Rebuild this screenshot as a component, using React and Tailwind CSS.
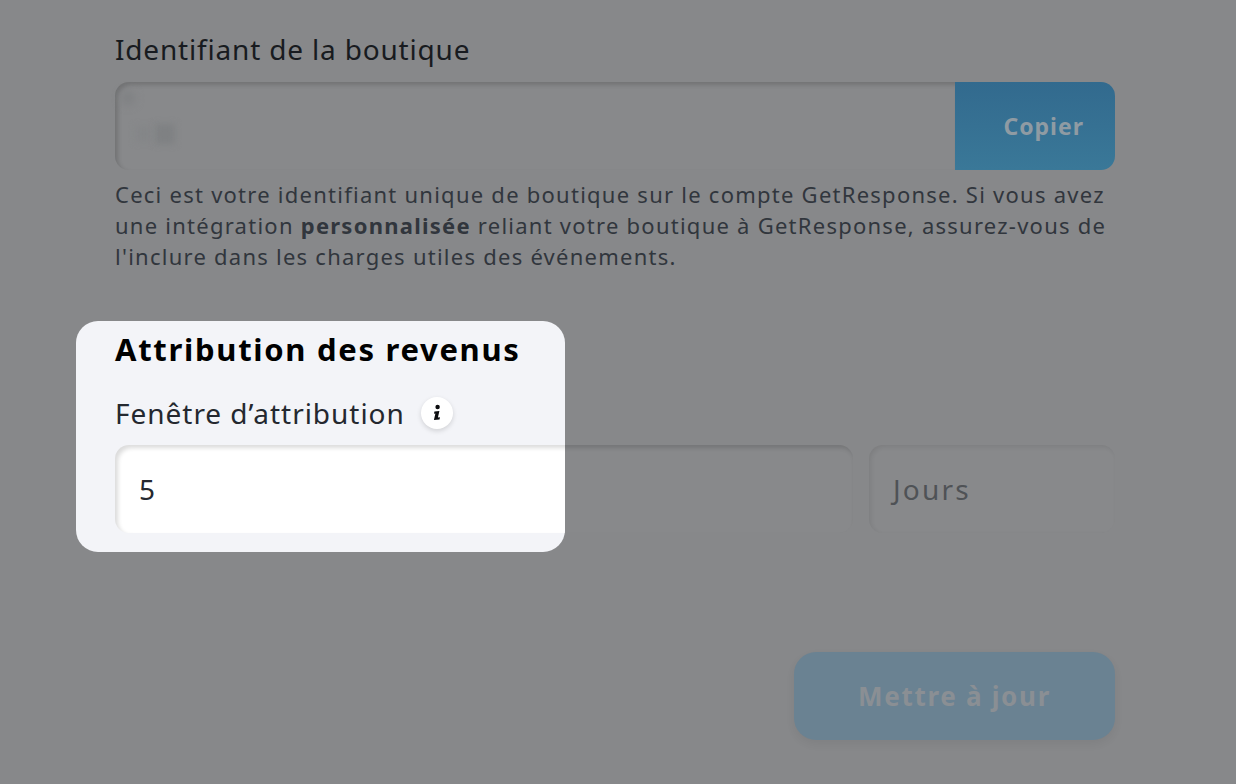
const font = { fontFamily: '"Noto Sans", "Open Sans", sans-serif' };

function InfoIcon() {
  return (
    <span className="flex h-8 w-8 items-center justify-center rounded-full bg-white shadow-[0_2px_5px_rgba(0,0,0,0.14)]">
      <svg width="14" height="18" viewBox="0 0 14 18" aria-hidden="true">
        <circle cx="7.6" cy="3" r="2.2" fill="#0b0c0f" />
        <path d="M4.4 7.4 L9.4 7 L7.9 13.4 L10 13.2 L9.5 15.6 L3.9 16 L5.4 9.6 L4 9.7 Z" fill="#0b0c0f" />
      </svg>
    </span>
  );
}

export default function App() {
  return (
    <div
      style={font}
      className="relative h-[784px] w-[1236px] overflow-hidden bg-[#87888a] pl-[115px] pr-[121px] pt-[29px]"
    >
      <div className="text-[28px] leading-[40px] tracking-[0.82px] text-[#181b20]">Identifiant de la boutique</div>

      <div className="mt-[13px] flex h-[88px]">
        <div className="relative flex-1 rounded-l-[14px] bg-[#88898b] shadow-[inset_3px_3px_4px_rgba(0,0,0,0.16)]">
          <div className="absolute left-[6px] top-[9px] h-[14px] w-[14px] rounded-full bg-[#7f8183] blur-[4px]" />
          <div className="absolute left-[40px] top-[42px] h-[20px] w-[20px] bg-[#7f8183] blur-[3px]" />
          <div className="absolute left-[20px] top-[44px] h-[16px] w-[18px] bg-[#848688] blur-[3px]" />
        </div>
        <button className="flex w-[160px] items-center justify-end rounded-r-[14px] bg-gradient-to-b from-[#326a8e] to-[#3a7898] pr-[31px] text-[23px] font-bold tracking-[1px] text-[#8f9ba3]">
          Copier
        </button>
      </div>

      <p className="mt-[9px] text-[22px] leading-[31px] tracking-[1.25px] text-[#31363d]">
        Ceci est votre identifiant unique de boutique sur le compte GetResponse. Si vous avez une intégration{' '}
        <strong className="font-bold">personnalisée</strong> reliant votre boutique à GetResponse, assurez-vous de
        l'inclure dans les charges utiles des événements.
      </p>

      <div className="mt-[173px] flex h-[88px] gap-[16px]">
        <div className="flex-1 rounded-[14px] bg-[#88898b] shadow-[inset_2px_3px_4px_rgba(0,0,0,0.14)]" />
        <div className="flex w-[246px] items-center rounded-[14px] bg-[#88898b] pl-[24px] text-[28px] tracking-[2.2px] text-[#4f5256] shadow-[inset_2px_2px_4px_rgba(0,0,0,0.08)]">
          Jours
        </div>
      </div>

      <div className="mt-[119px] flex justify-end">
        <button className="h-[88px] w-[321px] rounded-[22px] bg-[#6a8292] text-[26px] font-bold tracking-[1.7px] text-[#8a8f94] shadow-[0_4px_10px_rgba(0,0,0,0.06)]">
          Mettre à jour
        </button>
      </div>

      <div className="absolute left-[76px] top-[321px] h-[231px] w-[489px] overflow-hidden rounded-[22px] bg-[#f3f4f8] pl-[39px]">
        <h2 className="pt-[6px] text-[31px] font-bold leading-[44px] tracking-[1.7px] text-black">Attribution des revenus</h2>
        <div className="mt-[18px] flex h-[48px] items-center gap-[16px]">
          <span className="text-[28px] tracking-[0.97px] text-[#24282f]">Fenêtre d’attribution</span>
          <InfoIcon />
        </div>
        <div className="mt-[8px] flex h-[88px] w-[738px] items-center rounded-[14px] bg-white pl-[24px] text-[28px] text-[#24282f] shadow-[inset_3px_3px_4px_rgba(0,0,0,0.14)]">
          5
        </div>
      </div>
    </div>
  );
}
